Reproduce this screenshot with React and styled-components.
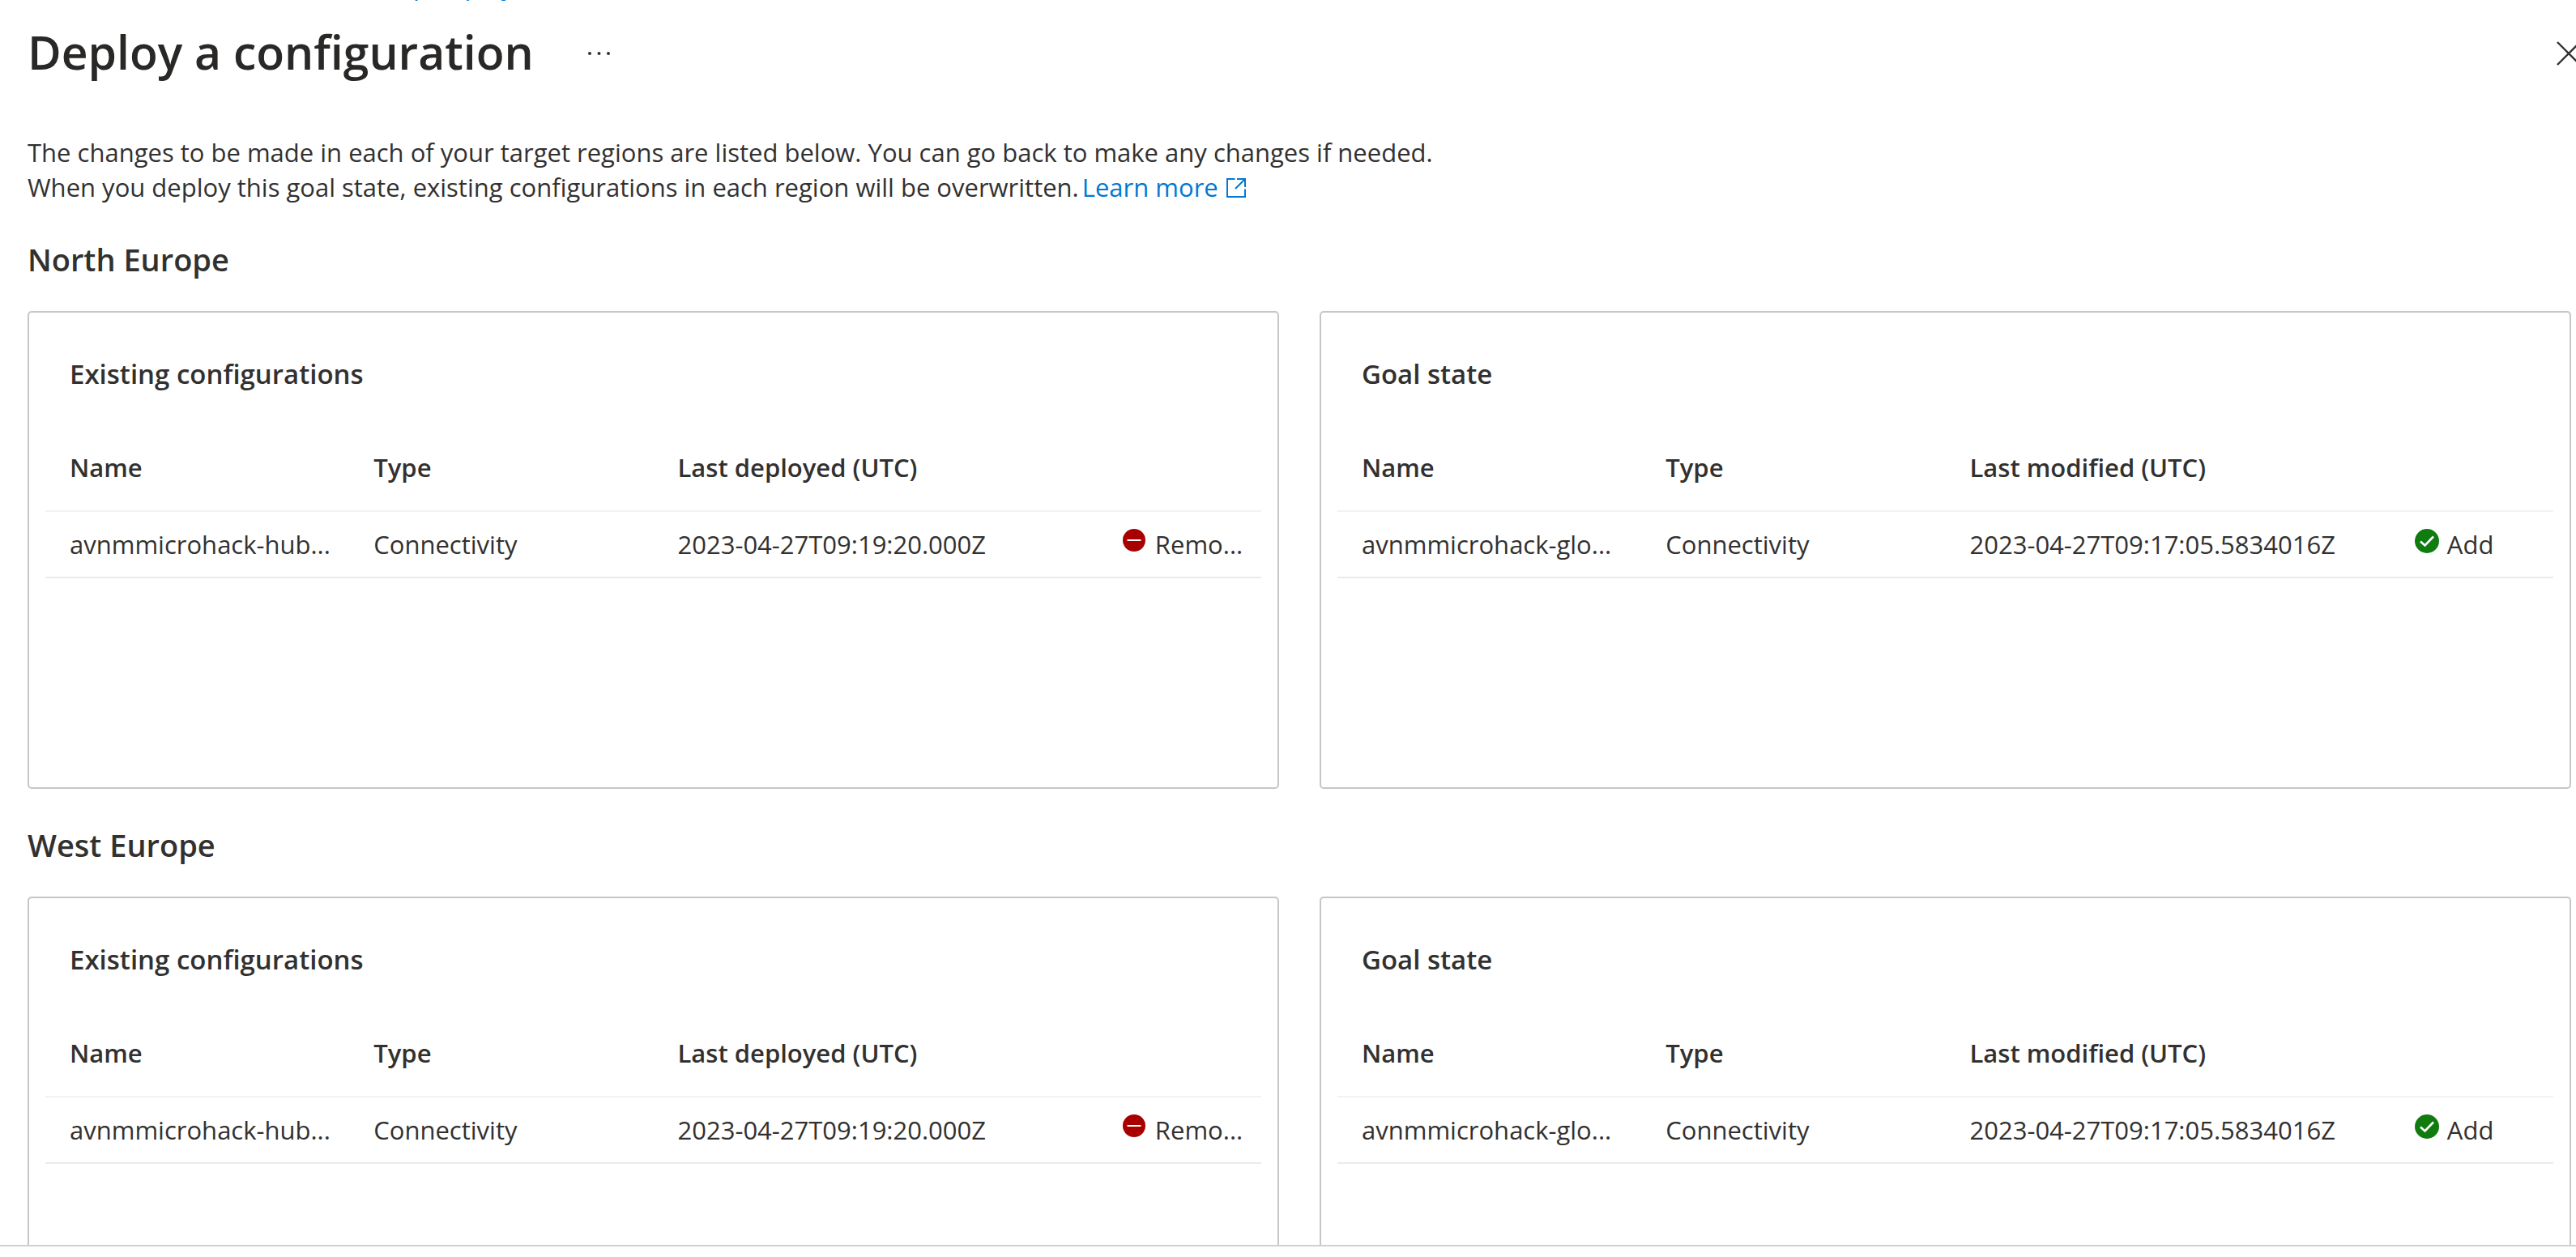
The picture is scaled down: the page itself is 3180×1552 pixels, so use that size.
import React from "react";
import styled, { createGlobalStyle } from "styled-components";

const GlobalStyle = createGlobalStyle`
  * { box-sizing: border-box; }
  html, body, #root { height: 100%; }
  body {
    margin: 0;
    overflow: hidden;
    background: #fff;
    color: #323130;
    font-family: "Open Sans", "Noto Sans", sans-serif;
    font-size: 31px;
    line-height: 43px;
  }
`;

const Blade = styled.div`
  display: flex;
  flex-direction: column;
  height: 100%;
`;

const Breadcrumb = styled.nav`
  display: flex;
  align-items: flex-end;
  flex: none;
  height: 4px;
  padding-left: 510px;
`;

const Link = styled.a`
  color: #0078d4;
  text-decoration: none;
`;

const LearnMore = styled(Link)`
  margin-left: 4px;
`;

const Header = styled.header`
  display: flex;
  align-items: center;
  flex: none;
  height: 78px;
  margin-top: 21px;
  padding-left: 34px;
`;

const Title = styled.h1`
  margin: 0;
  color: #292827;
  font-size: 57px;
  font-weight: 600;
  line-height: 78px;
`;

const IconButton = styled.button`
  display: flex;
  flex: none;
  padding: 4px 0 0;
  border: 0;
  background: none;
  color: #323130;
`;

const MoreButton = styled(IconButton)`
  margin-left: 66px;
`;

const CloseButton = styled(IconButton)`
  margin-left: auto;
  margin-right: -6px;
`;

const Content = styled.main`
  flex: 1;
  min-height: 0;
  overflow: hidden;
  padding: 64px 6px 0 34px;
`;

const Intro = styled.p`
  margin: 0 0 42px;
`;

const ExternalIcon = styled.svg`
  margin-left: 10px;
  vertical-align: -1px;
`;

const Region = styled.section`
  margin-bottom: 44px;
`;

const RegionTitle = styled.h2`
  margin: 0 0 39px;
  font-size: 38px;
  font-weight: 600;
  line-height: 50px;
`;

const Cards = styled.div`
  display: grid;
  grid-template-columns: 1fr 1fr;
  gap: 50px;
`;

const Card = styled.section`
  min-height: 590px;
  padding: 53px 20px 20px;
  border: 2px solid #c8c6c4;
  border-radius: 5px;
`;

const CardTitle = styled.h3`
  margin: 0 0 49px;
  padding-left: 30px;
  font-size: 33px;
  font-weight: 600;
  line-height: 46px;
`;

const Table = styled.table`
  width: 100%;
  table-layout: fixed;
  border-collapse: separate;
  border-spacing: 0;
`;

const Col = styled.col`
  width: ${(p) => p.$share}%;
`;

const HeadCell = styled.th`
  height: 98px;
  padding: 0 0 10px 30px;
  border-bottom: 2px solid #f3f2f1;
  font-weight: 600;
  text-align: left;
  white-space: nowrap;
`;

const Cell = styled.td`
  height: 82px;
  padding: 0 0 0 30px;
  border-bottom: 2px solid #edebe9;
  overflow: hidden;
  white-space: nowrap;
`;

const Status = styled.div`
  display: flex;
  align-items: center;
  gap: 10px;
`;

const StatusIcon = styled.svg`
  flex: none;
  margin-bottom: 8px;
`;

function RemoveIcon() {
  return (
    <StatusIcon width="30" height="30" viewBox="0 0 30 30" aria-hidden="true">
      <circle cx="14" cy="14" r="14" fill="#a80000" />
      <path d="M5.500 14H22.500" stroke="#fff" strokeWidth="2" />
    </StatusIcon>
  );
}

function AddIcon() {
  return (
    <StatusIcon width="30" height="30" viewBox="0 0 30 30" aria-hidden="true">
      <circle cx="15" cy="15" r="15" fill="#107c10" />
      <path d="M7 15.500L12.500 20.500L23 9.500" fill="none" stroke="#fff" strokeWidth="2.600" />
    </StatusIcon>
  );
}

const existing = {
  title: "Existing configurations",
  dateLabel: "Last deployed (UTC)",
  name: "avnmmicrohack-hub...",
  date: "2023-04-27T09:19:20.000Z",
  action: "Remo...",
  Icon: RemoveIcon,
};

const goal = {
  title: "Goal state",
  dateLabel: "Last modified (UTC)",
  name: "avnmmicrohack-glo...",
  date: "2023-04-27T09:17:05.5834016Z",
  action: "Add",
  Icon: AddIcon,
};

const regions = ["North Europe", "West Europe"];

function ConfigCard({ title, dateLabel, name, date, action, Icon }) {
  return (
    <Card>
      <CardTitle>{title}</CardTitle>
      <Table>
        <colgroup>
          <Col $share={25} />
          <Col $share={25} />
          <Col $share={36.6} />
          <Col $share={13.4} />
        </colgroup>
        <thead>
          <tr>
            <HeadCell scope="col">Name</HeadCell>
            <HeadCell scope="col">Type</HeadCell>
            <HeadCell scope="col">{dateLabel}</HeadCell>
            <HeadCell scope="col" />
          </tr>
        </thead>
        <tbody>
          <tr>
            <Cell>{name}</Cell>
            <Cell>Connectivity</Cell>
            <Cell>{date}</Cell>
            <Cell>
              <Status>
                <Icon />
                {action}
              </Status>
            </Cell>
          </tr>
        </tbody>
      </Table>
    </Card>
  );
}

const Footer = styled.footer`
  flex: none;
  height: 15px;
  border-top: 2px solid #d2d0ce;
`;

export default function App() {
  return (
    <Blade>
      <GlobalStyle />
      <Breadcrumb>
        <Link href="#">p deploy</Link>
      </Breadcrumb>
      <Header>
        <Title>Deploy a configuration</Title>
        <MoreButton type="button" aria-label="More actions">
          <svg width="30" height="8" viewBox="0 0 30 8" fill="currentColor" aria-hidden="true">
            <circle cx="3" cy="4" r="2" />
            <circle cx="14.500" cy="4" r="2" />
            <circle cx="26" cy="4" r="2" />
          </svg>
        </MoreButton>
        <CloseButton type="button" aria-label="Close">
          <svg width="30" height="30" viewBox="0 0 30 30" fill="none" stroke="currentColor" strokeWidth="2.400" aria-hidden="true">
            <path d="M1 1L29 29M29 1L1 29" />
          </svg>
        </CloseButton>
      </Header>
      <Content>
        <Intro>
          The changes to be made in each of your target regions are listed below. You can go back to make any changes if needed.
          <br />
          When you deploy this goal state, existing configurations in each region will be overwritten.
          <LearnMore href="#">
            Learn more
            <ExternalIcon width="24" height="24" viewBox="0 0 24 24" fill="none" stroke="currentColor" strokeWidth="2" aria-hidden="true">
              <path d="M10.500 1H1V23H23V13.500M13 1H23V11M23 1L11 13" />
            </ExternalIcon>
          </LearnMore>
        </Intro>
        {regions.map((region) => (
          <Region key={region}>
            <RegionTitle>{region}</RegionTitle>
            <Cards>
              <ConfigCard {...existing} />
              <ConfigCard {...goal} />
            </Cards>
          </Region>
        ))}
      </Content>
      <Footer />
    </Blade>
  );
}
